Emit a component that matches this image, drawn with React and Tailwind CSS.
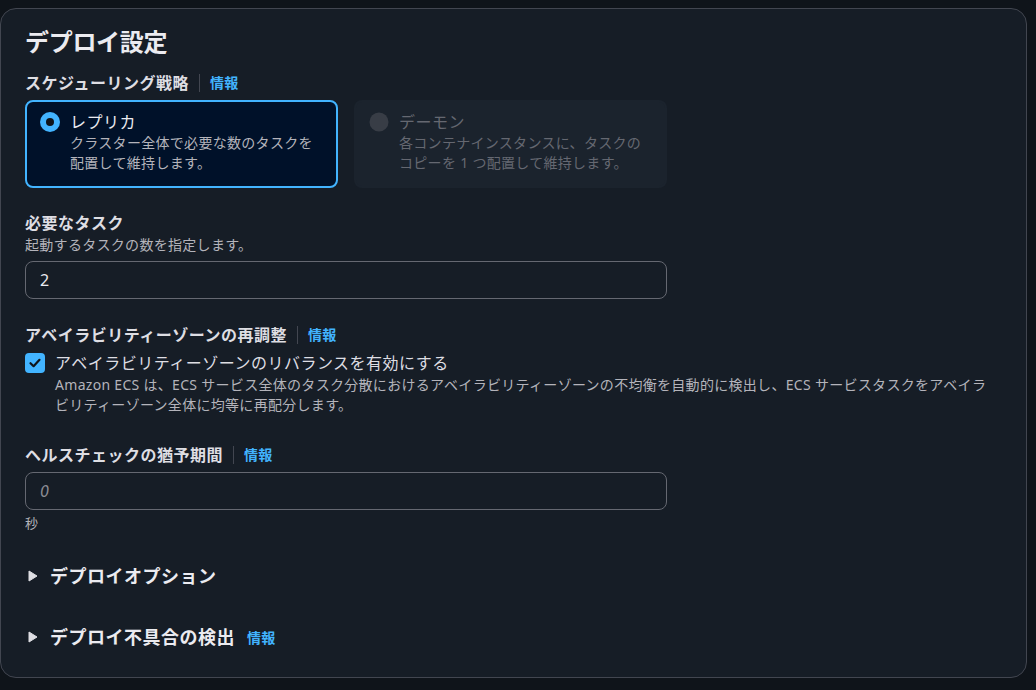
import React from 'react';

const Info = ({ divider = true }) => (
    <span className="flex items-center">
        {divider && <span className="mx-[10px] h-[18px] w-px bg-[#424650]" />}
        <span className="text-[14px] font-bold tracking-[0.3px] text-[#42b4ff]">情報</span>
    </span>
);

const Label = ({ children, info, className = '' }) => (
    <div className={`flex items-center text-[16px] leading-[22px] font-bold tracking-[0.5px] text-[#dedee3] ${className}`}>
        <span>{children}</span>
        {info && <Info />}
    </div>
);

const Radio = ({ checked }) =>
    checked ? (
        <svg width="20" height="20" viewBox="0 0 20 20" className="shrink-0">
            <circle cx="10" cy="10" r="10" fill="#42b4ff" />
            <circle cx="10" cy="10" r="4" fill="#0f141a" />
        </svg>
    ) : (
        <svg width="20" height="20" viewBox="0 0 20 20" className="shrink-0">
            <circle cx="10" cy="10" r="9.5" fill="#383d46" />
        </svg>
    );

const Tile = ({ checked, title, desc }) => (
    <div
        className={`flex gap-[10px] rounded-[8px] border-2 px-[13px] pt-[9px] pb-[13px] ${
            checked ? 'border-[#42b4ff] bg-[#001129]' : 'border-[#1b232d] bg-[#1b232d]'
        }`}
    >
        <div className="pt-[1px]">
            <Radio checked={checked} />
        </div>
        <div>
            <div className={`text-[16px] leading-[22px] tracking-[0.5px] ${checked ? 'text-[#ebebf0]' : 'text-[#656871]'}`}>{title}</div>
            <div className={`text-[14px] leading-[20px] tracking-[0.3px] ${checked ? 'text-[#b4b4bb]' : 'text-[#656871]'}`}>{desc}</div>
        </div>
    </div>
);

const Caret = () => (
    <svg width="10" height="12" viewBox="0 0 10 12" className="shrink-0">
        <path d="M1 1 L9 6 L1 11 Z" fill="#dedee3" stroke="#dedee3" strokeWidth="1" strokeLinejoin="round" />
    </svg>
);

export default function App() {
    return (
        <div className="min-h-[690px] w-[1036px] bg-[#0f141a] pt-[8px] font-['Noto_Sans','Noto_Sans_CJK_JP',sans-serif]">
            <div className="h-[670px] w-[1027px] rounded-[16px] border border-[#424650] bg-[#161d26] pl-[24px] pr-[25px] pt-[18px]">
                <h2 className="text-[24px] leading-[30px] font-bold tracking-[-0.3px] text-[#ebebf0]">デプロイ設定</h2>

                <Label info className="mt-[15px]">スケジューリング戦略</Label>
                <div className="mt-[6px] grid w-[642px] grid-cols-2 gap-[16px]">
                    <Tile checked title="レプリカ" desc="クラスター全体で必要な数のタスクを配置して維持します。" />
                    <Tile title="デーモン" desc="各コンテナインスタンスに、タスクのコピーを 1 つ配置して維持します。" />
                </div>

                <Label className="mt-[24px]">必要なタスク</Label>
                <div className="mt-[1px] text-[14px] leading-[20px] tracking-[0.3px] text-[#b4b4bb]">起動するタスクの数を指定します。</div>
                <div className="mt-[6px] flex h-[38px] w-[642px] items-center rounded-[8px] border border-[#656871] px-[14px] text-[16px] text-[#ebebf0]">
                    2
                </div>

                <Label info className="mt-[25px]">アベイラビリティーゾーンの再調整</Label>
                <div className="mt-[6px] flex gap-[10px]">
                    <div className="mt-[1px] flex h-[20px] w-[20px] shrink-0 items-center justify-center rounded-[4px] bg-[#42b4ff]">
                        <svg width="14" height="14" viewBox="0 0 14 14">
                            <path d="M2.5 7.2 L5.6 10.2 L11.5 3.8" fill="none" stroke="#0f141a" strokeWidth="2.2" strokeLinecap="round" strokeLinejoin="round" />
                        </svg>
                    </div>
                    <div>
                        <div className="text-[16px] leading-[22px] tracking-[0.5px] text-[#dedee3]">アベイラビリティーゾーンのリバランスを有効にする</div>
                        <div className="mt-[1px] w-[938px] text-[14px] leading-[20px] tracking-[0.3px] text-[#b4b4bb]">
                            Amazon ECS は、ECS サービス全体のタスク分散におけるアベイラビリティーゾーンの不均衡を自動的に検出し、ECS サービスタスクをアベイラビリティーゾーン全体に均等に再配分します。
                        </div>
                    </div>
                </div>

                <Label info className="mt-[29px]">ヘルスチェックの猶予期間</Label>
                <div className="mt-[6px] flex h-[38px] w-[642px] items-center rounded-[8px] border border-[#656871] px-[14px] text-[16px] italic text-[#8c8c94]">
                    0
                </div>
                <div className="mt-[4px] text-[13px] leading-[18px] text-[#b4b4bb]">秒</div>

                <div className="mt-[32px] flex items-center gap-[12px] pl-[3px]">
                    <Caret />
                    <span className="text-[18px] leading-[24px] font-bold tracking-[0.5px] text-[#ebebf0]">デプロイオプション</span>
                </div>

                <div className="mt-[37px] flex items-center gap-[12px] pl-[3px]">
                    <Caret />
                    <span className="text-[18px] leading-[24px] font-bold tracking-[0.5px] text-[#ebebf0]">デプロイ不具合の検出</span>
                    <span className="text-[14px] font-bold tracking-[0.3px] text-[#42b4ff]">情報</span>
                </div>
            </div>
        </div>
    );
}
